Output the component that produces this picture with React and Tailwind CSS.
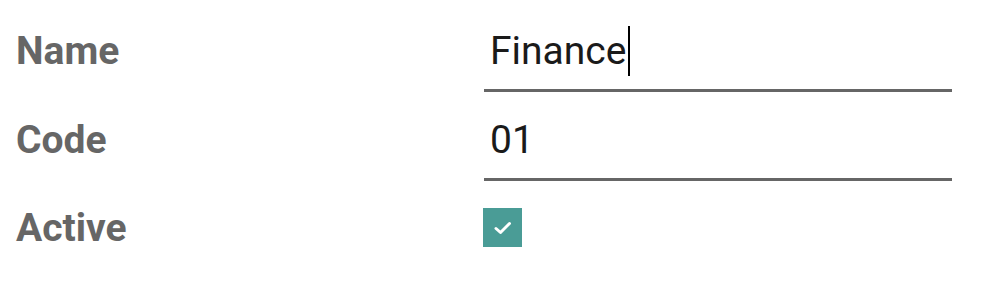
import React from 'react';

const Field = ({ label, value, cursor }) => (
  <div className="flex">
    <div className="w-[468px] text-[39px] leading-[50px] font-bold text-[#666666]">{label}</div>
    <div className="w-[468px] border-b-[3px] border-[#666666] pb-[13px] pl-[6px] text-[39px] leading-[50px] text-[#1a1a1a]">
      {value}
      {cursor && <span className="inline-block w-[2px] h-[50px] ml-[2px] bg-black align-top"></span>}
    </div>
  </div>
);

export default function App() {
  return (
    <div className="bg-white w-[982px] h-[288px] pl-4 pt-[26px] font-['Roboto',sans-serif]">
      <div className="flex flex-col gap-[23px]">
        <Field label="Name" value="Finance" cursor />
        <Field label="Code" value="01" />
      </div>
      <div className="flex mt-[22px]">
        <div className="w-[468px] text-[39px] leading-[50px] font-bold text-[#666666]">Active</div>
        <div className="mt-[5px] ml-[-1px] w-[39px] h-[39px] bg-[#4a9c96] flex items-center justify-center">
          <svg width="20" height="16" viewBox="0 0 20 16" fill="none">
            <path d="M3 8.5l4.5 4 9-9" stroke="white" strokeWidth="3" strokeLinecap="round" strokeLinejoin="round" />
          </svg>
        </div>
      </div>
    </div>
  );
}
